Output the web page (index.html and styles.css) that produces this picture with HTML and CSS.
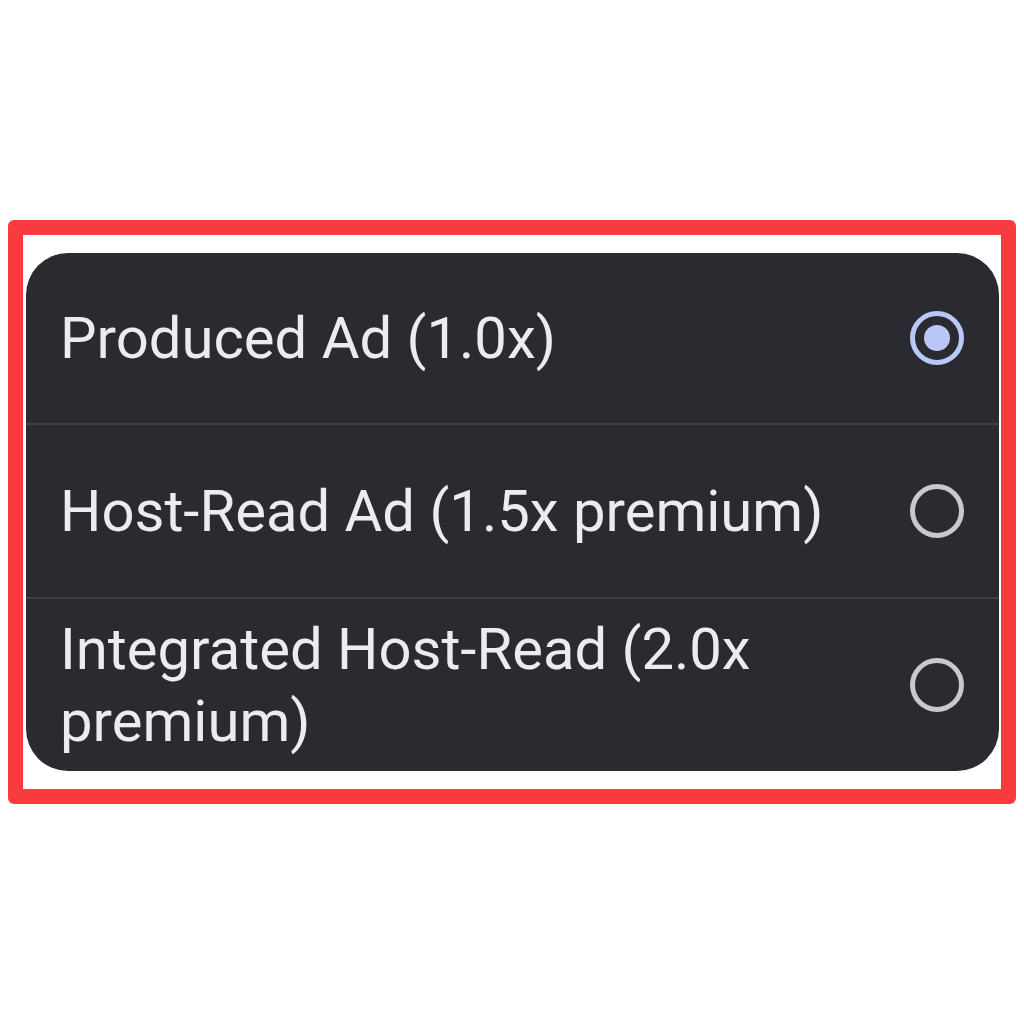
FILE: index.html
```html
<!DOCTYPE html>
<html lang="en">
<head>
  <meta charset="UTF-8">
  <meta name="viewport" content="width=device-width, initial-scale=1.0">
  <title>Ad type</title>
  <link rel="stylesheet" href="styles.css">
</head>
<body>
  <div class="frame">
    <div class="panel">
      <div class="option">
        <span class="label">Produced Ad (1.0x)</span>
        <span class="radio checked"></span>
      </div>
      <div class="option">
        <span class="label">Host-Read Ad (1.5x premium)</span>
        <span class="radio"></span>
      </div>
      <div class="option">
        <span class="label">Integrated Host-Read (2.0x premium)</span>
        <span class="radio"></span>
      </div>
    </div>
  </div>
</body>
</html>
```

FILE: styles.css
```css
body {
  margin: 0;
  padding: 220px 8px 0 8px;
  background-color: #ffffff;
  font-family: Roboto, "Noto Sans", sans-serif;
}

.frame {
  border: 15px solid #f93a3f;
  border-radius: 6px;
  padding: 18px 2px 18px 3px;
}

.panel {
  background-color: #2a2b30;
  border-radius: 42px;
  overflow: hidden;
}

.option {
  display: flex;
  align-items: center;
  justify-content: space-between;
  gap: 40px;
  height: 172px;
  padding: 0 35px 0 34px;
  border-top: 2px solid #3f4046;
}

.option:first-child {
  height: 170px;
  border-top: none;
}

.label {
  flex: 1;
  color: #ececee;
  font-size: 58px;
  line-height: 72px;
}

.radio {
  flex-shrink: 0;
  width: 44px;
  height: 44px;
  border: 5px solid #c9c9cd;
  border-radius: 50%;
  box-sizing: content-box;
  display: flex;
  align-items: center;
  justify-content: center;
}

.radio.checked {
  border-color: #b9c8f7;
}

.radio.checked::after {
  content: "";
  width: 26px;
  height: 26px;
  border-radius: 50%;
  background-color: #b9c8f7;
}
```
